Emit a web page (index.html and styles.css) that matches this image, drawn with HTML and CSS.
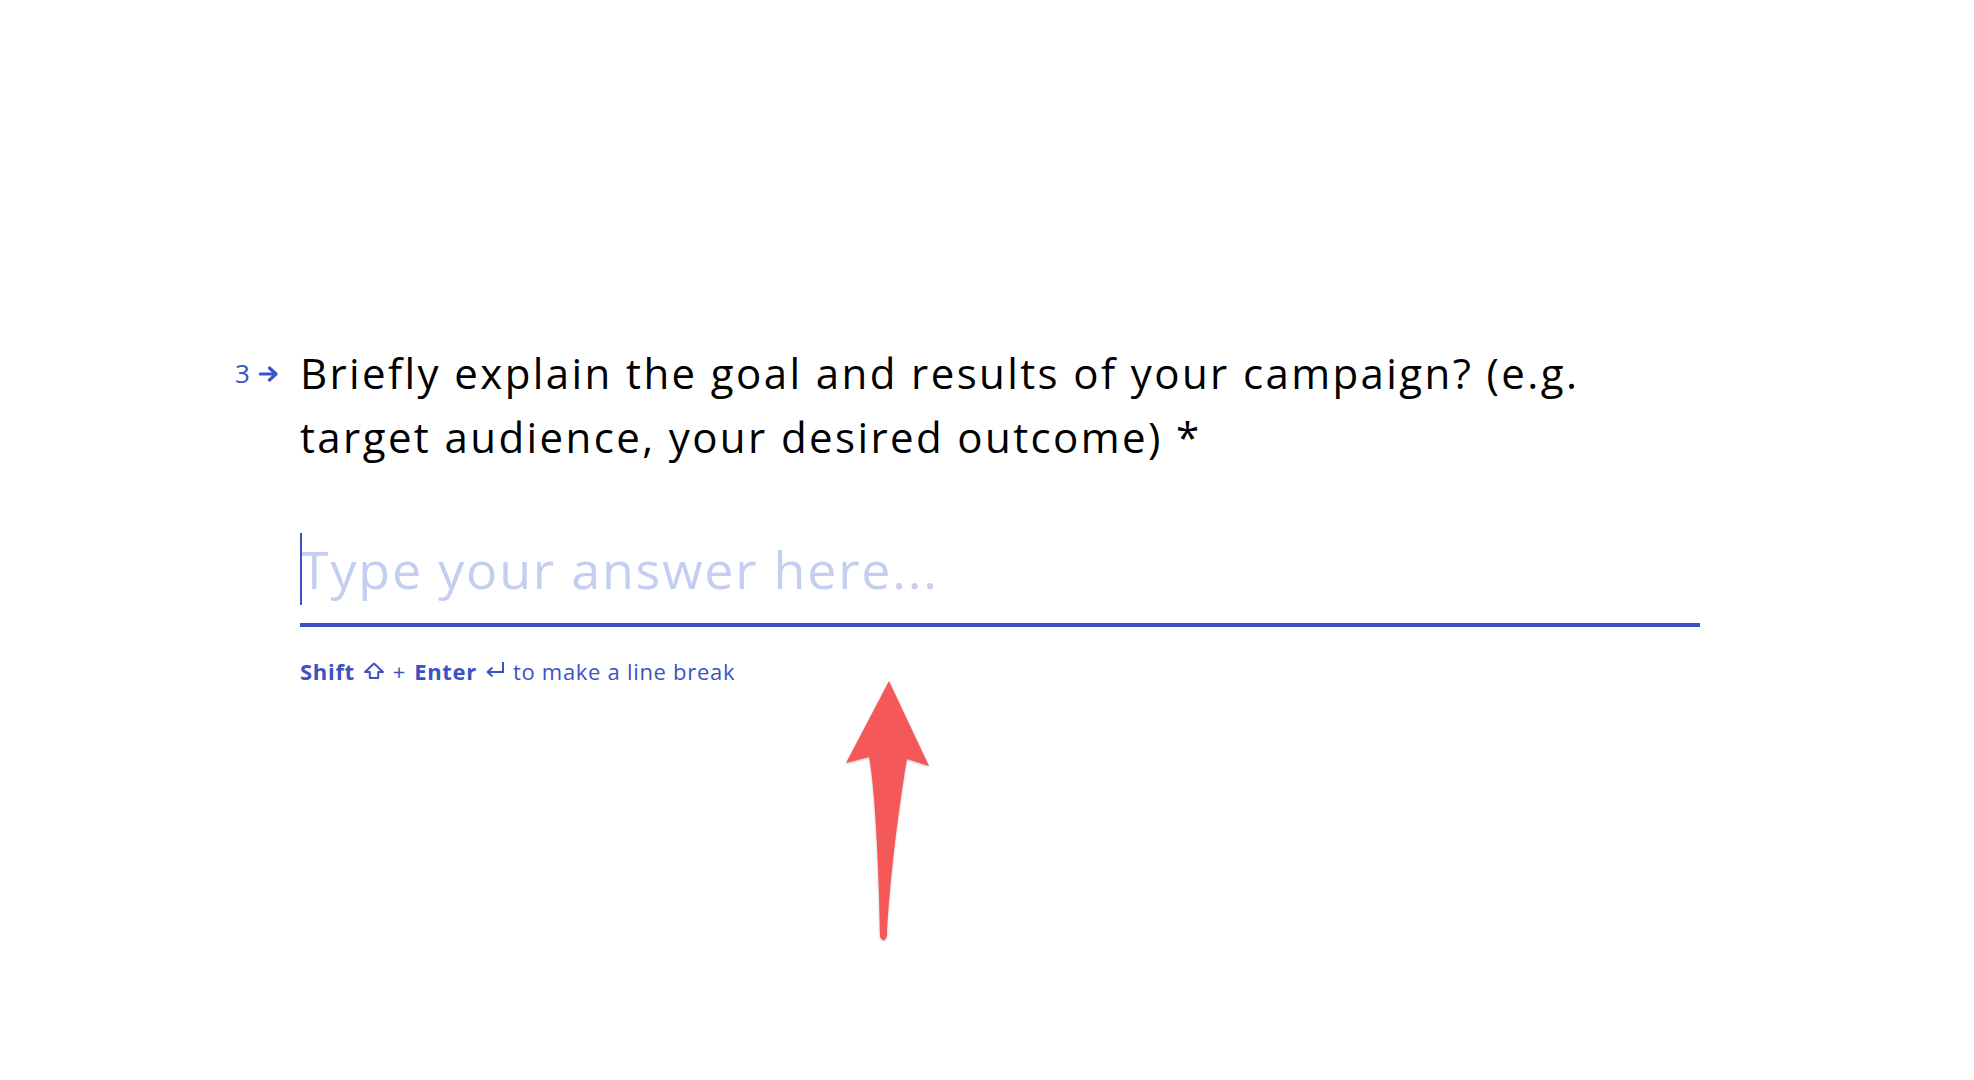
FILE: index.html
```html
<!DOCTYPE html>
<html lang="en">
<head>
<meta charset="utf-8">
<title>Question 3</title>
<link rel="stylesheet" href="styles.css">
</head>
<body>
<main class="page">
  <section class="question">
    <div class="prefix">
      <span class="num">3</span>
      <svg class="num-arrow" viewBox="0 0 20 16" width="20" height="16" aria-hidden="true">
        <path d="M1.5 8 H15" stroke="currentColor" stroke-width="3.2" stroke-linecap="round" fill="none"/>
        <path d="M10.5 2 L17 8 L10.5 14" stroke="currentColor" stroke-width="3.2" stroke-linecap="round" stroke-linejoin="round" fill="none"/>
      </svg>
    </div>
    <div class="body">
      <h1 class="title">Briefly explain the goal and results of your campaign? (e.g. target audience, your desired outcome) *</h1>
      <div class="answer">
        <span class="caret"></span>
        <span class="placeholder">Type your answer here...</span>
      </div>
      <p class="hint">
        <b>Shift</b>
        <svg class="key-ico" viewBox="0 0 22 18" width="22" height="18" aria-hidden="true">
          <path d="M11 1.5 L20 10 H15.2 V16 H6.8 V10 H2 Z" fill="none" stroke="currentColor" stroke-width="2" stroke-linejoin="round"/>
        </svg>
        <span class="plus">+</span>
        <b>Enter</b>
        <svg class="key-ico enter" viewBox="0 0 20 16" width="20" height="16" aria-hidden="true">
          <path d="M18 1 V11 H3" fill="none" stroke="currentColor" stroke-width="2"/>
          <path d="M7.5 6.5 L2.6 11 L7.5 15.5" fill="none" stroke="currentColor" stroke-width="2" stroke-linejoin="round"/>
        </svg>
        <span>to make a line break</span>
      </p>
    </div>
  </section>
  <svg class="pointer" viewBox="0 0 100 276" width="100" height="276" aria-hidden="true">
    <path d="M49 6 L89 91 L67 84 C62 112 50 196 47 261 Q44 269 40 262 C39 196 35 112 29 82 L6 88 Z" fill="#f55858"/>
  </svg>
</main>
</body>
</html>
```

FILE: styles.css
```css
html, body {
  margin: 0;
  padding: 0;
  background: #ffffff;
}

body {
  font-family: "Open Sans", "Liberation Sans", sans-serif;
  color: #000;
  width: 1974px;
  height: 1080px;
  overflow: hidden;
}

.page {
  position: relative;
  height: 1080px;
}

.question {
  display: flex;
  padding-top: 341px;
  padding-left: 235px;
}

.prefix {
  width: 65px;
  height: 64px;
  display: flex;
  align-items: center;
  gap: 9px;
  color: #3b52c4;
}

.num {
  font-size: 26px;
  line-height: 1;
}

.num-arrow {
  display: block;
  margin-top: 1px;
}

.body {
  width: 1400px;
}

.title {
  margin: 0;
  font-size: 42px;
  font-weight: 400;
  line-height: 64px;
  letter-spacing: 2.4px;
  color: #000;
}

.answer {
  position: relative;
  margin-top: 64px;
  padding-bottom: 18px;
  border-bottom: 4px solid #3b52c4;
  height: 72px;
}

.caret {
  position: absolute;
  left: 0;
  top: 0;
  width: 2px;
  height: 72px;
  background: #3b52c4;
}

.placeholder {
  font-size: 52px;
  line-height: 72px;
  color: #c4cef0;
  letter-spacing: 1.8px;
}

.hint {
  margin: 30px 0 0 0;
  font-size: 22px;
  line-height: 28px;
  letter-spacing: 0.7px;
  color: #3b52c4;
  display: flex;
  align-items: center;
  gap: 8px;
}

.hint b {
  font-weight: 700;
}

.key-ico {
  display: block;
}

.key-ico.enter {
  margin-top: -5px;
}

.pointer {
  position: absolute;
  left: 840px;
  top: 675px;
  filter: drop-shadow(0 1px 1px rgba(0, 0, 0, 0.25));
}
```
